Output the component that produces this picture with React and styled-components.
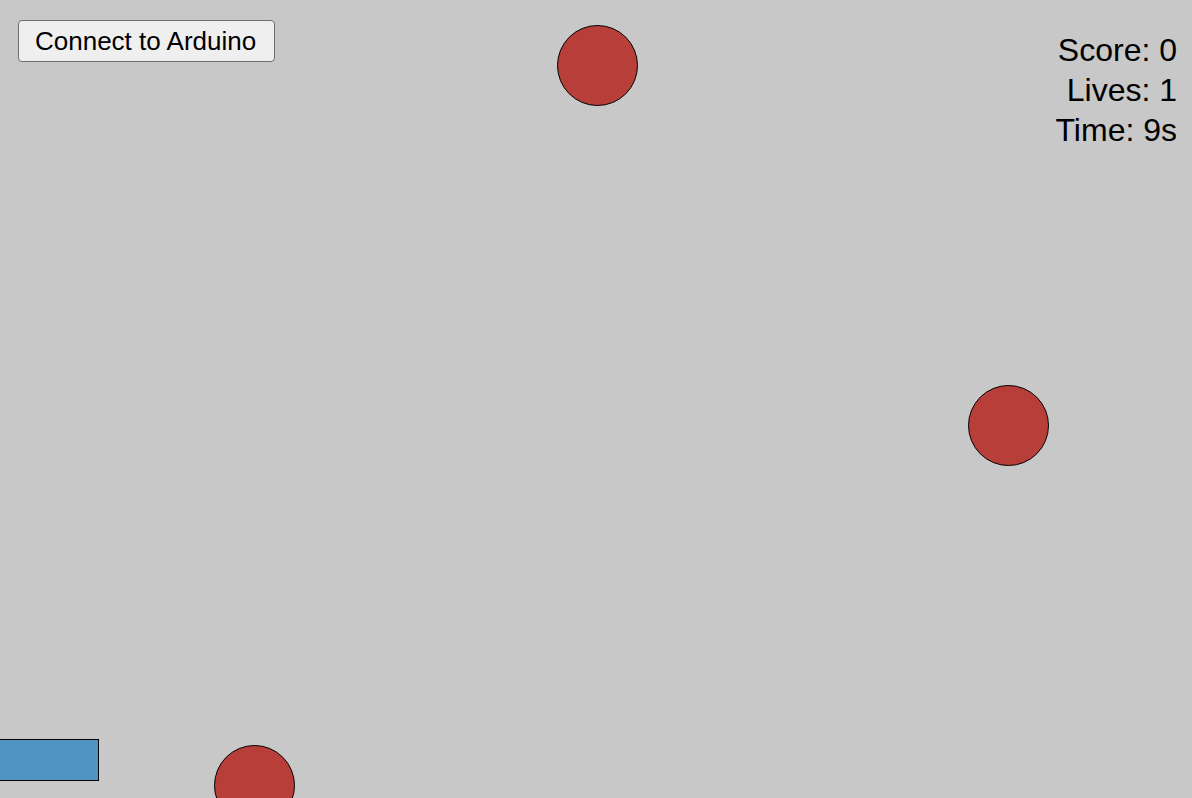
import styled, { createGlobalStyle } from "styled-components";

const GlobalStyle = createGlobalStyle`
  html, body {
    margin: 0;
    padding: 0;
    overflow: hidden;
  }
  body {
    font-family: "Liberation Sans", Arial, sans-serif;
  }
`;

const StyledStage = styled.div`
  position: relative;
  width: 1192px;
  height: 798px;
  background: #c8c8c8;
  overflow: hidden;
  padding: 20px 18px;
  box-sizing: border-box;
`;

const StyledConnect = styled.button`
  font-family: "Liberation Sans", Arial, sans-serif;
  font-size: 26px;
  line-height: 30px;
  color: #000;
  background: #efefef;
  border: 1px solid #6f6f6f;
  border-radius: 4px;
  padding: 5px 18px 5px 16px;
  cursor: pointer;
`;

const StyledHud = styled.div`
  position: absolute;
  top: 30px;
  right: 15px;
  text-align: right;
  font-size: 32px;
  line-height: 40px;
  color: #000;
`;

const StyledBall = styled.div`
  position: absolute;
  left: ${(p) => p.$x - 41}px;
  top: ${(p) => p.$y - 41}px;
  width: 79px;
  height: 79px;
  border: 1.5px solid #000;
  border-radius: 50%;
  background: #b83e3a;
`;

const StyledPaddle = styled.div`
  position: absolute;
  left: -2px;
  top: 739px;
  width: 99px;
  height: 40px;
  border: 1.5px solid #000;
  background: #4f95c3;
`;

const balls = [
  { x: 597.8, y: 65.5 },
  { x: 1009.2, y: 425.5 },
  { x: 254.8, y: 785.5 },
];

const App = () => {
  return (
    <>
      <GlobalStyle />
      <StyledStage>
        <StyledConnect>Connect to Arduino</StyledConnect>
        {balls.map((b, i) => (
          <StyledBall key={i} $x={b.x} $y={b.y} />
        ))}
        <StyledPaddle />
        <StyledHud>
          <div>Score: 0</div>
          <div>Lives: 1</div>
          <div>Time: 9s</div>
        </StyledHud>
      </StyledStage>
    </>
  );
};

export default App;
